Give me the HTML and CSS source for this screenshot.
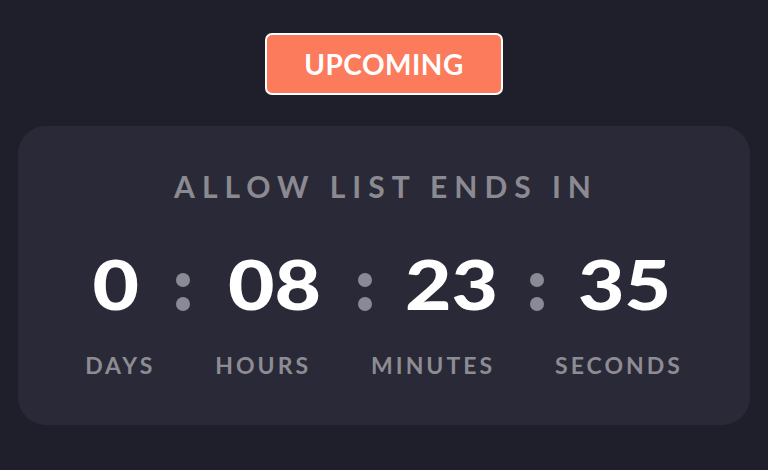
FILE: index.html
```html
<!DOCTYPE html>
<html>
<head>
<meta charset="utf-8">
<link rel="stylesheet" href="styles.css">
</head>
<body>
<div class="page">
  <div class="badge">UPCOMING</div>
  <section class="card">
    <h2 class="title">ALLOW LIST ENDS IN</h2>
    <div class="numbers">
      <div class="num n-days"><span>0</span></div>
      <div class="colon"><span class="dot"></span><span class="dot"></span></div>
      <div class="num n-hours"><span>08</span></div>
      <div class="colon"><span class="dot"></span><span class="dot"></span></div>
      <div class="num n-minutes"><span>23</span></div>
      <div class="colon"><span class="dot"></span><span class="dot"></span></div>
      <div class="num n-seconds"><span>35</span></div>
    </div>
    <div class="labels">
      <div class="label">DAYS</div>
      <div class="label">HOURS</div>
      <div class="label">MINUTES</div>
      <div class="label">SECONDS</div>
    </div>
  </section>
</div>
</body>
</html>
```
FILE: styles.css
```css
html, body {
  margin: 0;
  padding: 0;
  background: #1f1f2c;
  font-family: "Lato", "Noto Sans", sans-serif;
}
.page {
  width: 768px;
  height: 470px;
  padding-top: 33px;
  box-sizing: border-box;
  display: flex;
  flex-direction: column;
  align-items: center;
}
.badge {
  width: 238px;
  height: 62px;
  box-sizing: border-box;
  border: 2px solid #ffffff;
  border-radius: 7px;
  background: #fc7b5c;
  color: #ffffff;
  font-size: 28px;
  font-weight: 700;
  letter-spacing: 0.5px;
  display: flex;
  align-items: center;
  justify-content: center;
}
.card {
  margin-top: 31px;
  width: 732px;
  height: 299px;
  box-sizing: border-box;
  background: #2a2938;
  border-radius: 28px;
  padding-top: 45px;
}
.title {
  margin: 0;
  text-align: center;
  font-size: 30px;
  line-height: 30px;
  font-weight: 700;
  letter-spacing: 7px;
  padding-left: 4px;
  color: #8b8a91;
}
.numbers {
  margin-top: 49px;
  display: flex;
  justify-content: center;
  gap: 37px;
  padding-right: 8px;
}
.num {
  height: 68px;
  display: flex;
  justify-content: center;
  font-size: 68px;
  line-height: 68px;
  font-weight: 900;
  color: #ffffff;
  white-space: nowrap;
}
.num span {
  display: block;
  transform: scaleX(1.18);
}
.n-days { width: 47px; }
.n-hours { width: 94px; }
.n-minutes { width: 84px; }
.n-seconds { width: 87px; }
.colon {
  width: 14px;
  height: 68px;
  display: flex;
  flex-direction: column;
  align-items: center;
  padding-top: 23px;
  box-sizing: border-box;
  gap: 10px;
}
.dot {
  display: block;
  width: 14px;
  height: 14px;
  border-radius: 50%;
  background: #8a8996;
}
.labels {
  margin-top: 36px;
  display: flex;
  justify-content: center;
  gap: 60px;
}
.label {
  font-size: 23px;
  line-height: 23px;
  font-weight: 700;
  letter-spacing: 3px;
  color: #8d8c93;
  white-space: nowrap;
}
```
